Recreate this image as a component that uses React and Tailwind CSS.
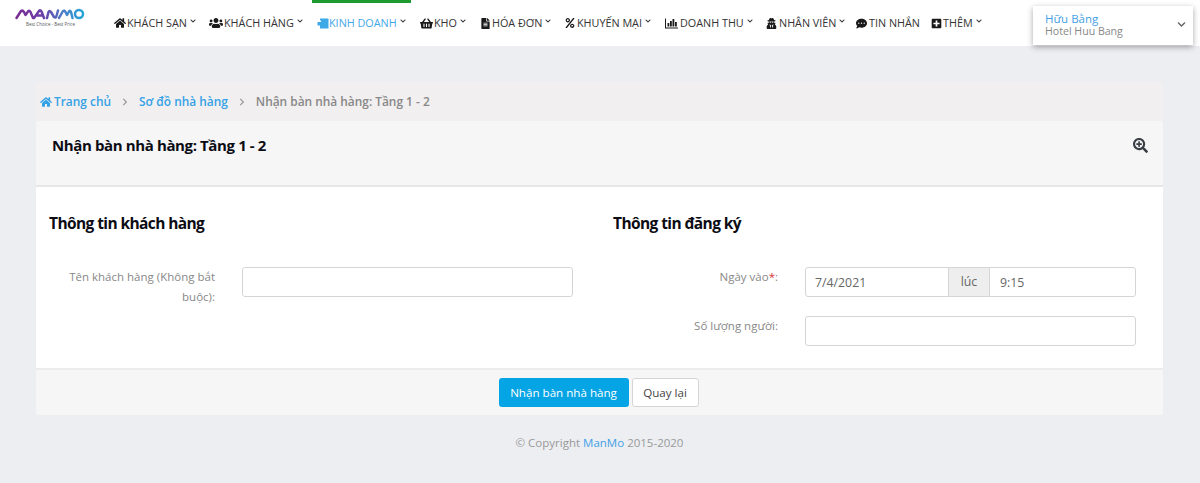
import React from "react";
import { FaHome, FaUsers, FaShoppingBasket, FaFileAlt, FaPercent, FaUserSecret, FaCommentDots, FaPlusSquare, FaSearchPlus, FaChevronDown, FaChevronRight } from "react-icons/fa";

function TagIcon({ className }) {
  return (
    <svg className={className} width="12" height="11" viewBox="0 0 12 11" fill="currentColor">
      <path d="M3 0.5 H11.5 V10.5 H3 V7.5 H0.5 V4 H4 V2.5 H3 Z" />
    </svg>
  );
}

function ChartIcon({ className }) {
  return (
    <svg className={className} width="13" height="11" viewBox="0 0 13 11" fill="currentColor">
      <path d="M0 0.5 H1 V9.5 H13 V10.5 H0 Z" />
      <rect x="2.5" y="5" width="1.8" height="3.5" />
      <rect x="5" y="3" width="1.8" height="5.5" />
      <rect x="7.5" y="1" width="1.8" height="7.5" />
      <rect x="10" y="4" width="1.8" height="4.5" />
    </svg>
  );
}

const items = [
  { label: "KHÁCH SẠN", Icon: FaHome, w: "w-[95px]", iw: "w-[13px]", is: "text-[12px]", caret: true },
  { label: "KHÁCH HÀNG", Icon: FaUsers, w: "w-[103px]", iw: "w-[15px]", is: "text-[14px]", caret: true },
  { label: "KINH DOANH", Icon: TagIcon, w: "w-[108px]", iw: "w-[12px]", caret: true, active: true },
  { label: "KHO", Icon: FaShoppingBasket, w: "w-[60px]", iw: "w-[14px]", is: "text-[13px]", caret: true },
  { label: "HÓA ĐƠN", Icon: FaFileAlt, w: "w-[85px]", iw: "w-[12px]", is: "text-[11px]", caret: true },
  { label: "KHUYẾN MẠI", Icon: FaPercent, w: "w-[100px]", iw: "w-[12px]", is: "text-[10px]", caret: true },
  { label: "DOANH THU", Icon: ChartIcon, w: "w-[101px]", iw: "w-[15px]", caret: true },
  { label: "NHÂN VIÊN", Icon: FaUserSecret, w: "w-[90px]", iw: "w-[13px]", is: "text-[11px]", caret: true },
  { label: "TIN NHẮN", Icon: FaCommentDots, w: "w-[75px]", iw: "w-[13px]", is: "text-[11px]" },
  { label: "THÊM", Icon: FaPlusSquare, w: "w-[60px]", iw: "w-[12px]", is: "text-[11px]", caret: true },
];

function Logo() {
  return (
    <div className="w-[114px] h-full pl-[15px] pt-[8px] flex flex-col">
      <svg width="70" height="12" viewBox="0 0 70 12" fill="none" strokeWidth="2.5" strokeLinejoin="round" strokeLinecap="round">
        <defs>
          <linearGradient id="lg" x1="0" x2="70" y1="0" y2="0" gradientUnits="userSpaceOnUse">
            <stop offset="0" stopColor="#7b2d91" />
            <stop offset="0.4" stopColor="#6a3fa8" />
            <stop offset="0.7" stopColor="#4a80c8" />
            <stop offset="1" stopColor="#1fa8dc" />
          </linearGradient>
        </defs>
        <path stroke="url(#lg)" d="M1.5 10 L6 3 Q7.5 2 9 4 L10.5 7 L13 3.5 Q14.5 2 15.5 4 L18 10 M19 10 L24 3 Q25.5 1.5 26.5 3.5 L29 10 M22 7.5 H28 M32 10 L33.5 4 Q34.5 2 36 4 L39 9 Q41 10.5 41.5 8 L43 2.5 M44 10 L48 3 Q49.5 2 50.5 4 L52 7 L54 3.5 Q55.5 2 56 4 L57.5 10" />
        <circle cx="64" cy="6" r="4" stroke="url(#lg)" />
      </svg>
      <span className="text-[4.5px] leading-[5px] text-[#555] ml-[11px] mt-[2px] whitespace-nowrap">Best Choice - Best Price</span>
    </div>
  );
}

function NavItem({ label, Icon, w, iw, is = "", caret, active }) {
  return (
    <div className={`${w} shrink-0 h-full relative flex items-center text-[10.8px] whitespace-nowrap ${active ? "text-[#3fa9e8]" : "text-[#333]"}`}>
      {active && <div className="absolute top-0 left-0 w-[99px] h-[3px] bg-[#1e9a2f]" />}
      <span className={`flex items-center ${active ? "pl-[5px]" : ""}`}>
        <span className={`${iw} flex items-center`}>
          <Icon className={`${is} ${active ? "text-[#3fa9e8]" : "text-[#1a1a1a]"}`} />
        </span>
        <span>{label}</span>
        {caret && <FaChevronDown className="text-[6px] ml-[3px] -mt-[4px] text-[#333]" />}
      </span>
    </div>
  );
}

function Header() {
  return (
    <header className="h-[46px] bg-white flex relative">
      <Logo />
      <nav className="flex h-full">
        {items.map((it) => <NavItem key={it.label} {...it} />)}
      </nav>
      <div className="absolute left-[1033px] top-[6px] w-[160px] h-[39px] bg-white shadow-[0_2px_6px_rgba(0,0,0,0.35)] pl-[12px] pt-[6px] leading-[13px]">
        <div className="text-[11.5px] text-[#3fa0e6]">Hữu Bằng</div>
        <div className="text-[10.6px] text-[#888]">Hotel Huu Bang</div>
        <FaChevronDown className="absolute right-[7px] top-[14px] text-[9px] text-[#666]" />
      </div>
    </header>
  );
}

function Breadcrumb() {
  return (
    <div className="h-[39px] bg-[#f1eff0] flex items-center pl-[4px] pt-[1px] text-[11.9px] font-semibold rounded-t-[4px]">
      <FaHome className="text-[#35a2e6] text-[12px] mr-[2px]" />
      <span className="text-[#35a2e6]">Trang chủ</span>
      <FaChevronRight className="text-[#999] text-[8px] mx-[10px]" />
      <span className="text-[#35a2e6]">Sơ đồ nhà hàng</span>
      <FaChevronRight className="text-[#999] text-[8px] mx-[10px]" />
      <span className="text-[#888]">Nhận bàn nhà hàng: Tầng 1 - 2</span>
    </div>
  );
}

function Field({ label, star, children, labelClass = "" }) {
  return (
    <div className="flex items-start">
      <label className={`text-[11.5px] leading-[20px] text-[#888] text-right ${labelClass}`}>
        {label}{star && <span className="text-[#d9343a]">*</span>}{star && ":"}
      </label>
      {children}
    </div>
  );
}

const boxClass = "h-[30px] bg-white border border-[#d5d5d5] rounded-[3px]";

export default function App() {
  return (
    <div className="min-h-[483px] bg-[#eceef2] text-[#333]" style={{ fontFamily: '"Open Sans", sans-serif' }}>
      <Header />
      <main className="pt-[36px] pl-[36px] w-[1163px]">
        <Breadcrumb />
        <section className="bg-white rounded-[4px] overflow-hidden">
          <div className="h-[66px] bg-[#f6f6f6] border-b-[2px] border-[#e6e6e6] flex justify-between pl-[16px] pr-[15px] pt-[14px]">
            <h1 className="text-[15px] leading-[20px] font-bold text-[#0c0c14] tracking-[-0.38px]">Nhận bàn nhà hàng: Tầng 1 - 2</h1>
            <FaSearchPlus className="text-[#3a3f46] text-[15px] mt-[3px]" />
          </div>
          <div className="h-[181px] bg-white flex">
            <div className="w-[564px] pl-[13px] pt-[26px]">
              <h2 className="text-[15.5px] leading-[20px] font-bold text-[#0c0c14] tracking-[-0.6px]">Thông tin khách hàng</h2>
              <div className="mt-[34px]">
                <Field label="Tên khách hàng (Không bắt buộc):" labelClass="w-[167px] ml-[-1px]">
                  <div className={`${boxClass} w-[331px] ml-[27px]`} />
                </Field>
              </div>
            </div>
            <div className="flex-1 pl-[13px] pt-[26px]">
              <h2 className="text-[15.5px] leading-[20px] font-bold text-[#0c0c14] tracking-[-0.6px]">Thông tin đăng ký</h2>
              <div className="mt-[34px] flex flex-col gap-[19px]">
                <Field label="Ngày vào" star labelClass="w-[165px] ml-[0px]">
                  <div className="ml-[27px] w-[331px] h-[30px] flex text-[12.3px] text-[#666]">
                    <div className="w-[144px] bg-white border border-[#d5d5d5] rounded-l-[3px] pl-[9px] leading-[29px]">7/4/2021</div>
                    <div className="w-[40px] bg-[#eeeeee] border-y border-[#d5d5d5] text-center leading-[27px]">lúc</div>
                    <div className="flex-1 bg-white border border-[#d5d5d5] rounded-r-[3px] pl-[10px] leading-[29px]">9:15</div>
                  </div>
                </Field>
                <Field label="Số lượng người:" labelClass="w-[165px] ml-[0px]">
                  <div className={`${boxClass} w-[331px] ml-[27px]`} />
                </Field>
              </div>
            </div>
          </div>
          <div className="h-[47px] bg-[#f6f6f6] border-t-[2px] border-[#ececec] flex justify-center gap-[3px] pt-[8px] pr-[2px]">
            <button className="w-[130px] h-[29px] rounded-[3px] bg-[#05a4e4] text-white text-[11.6px]">Nhận bàn nhà hàng</button>
            <button className="w-[67px] h-[29px] rounded-[3px] bg-white border border-[#d5d5d5] text-[#444] text-[11.6px]">Quay lại</button>
          </div>
        </section>
        <footer className="text-center text-[11.5px] text-[#999] pt-[19px]">
          © Copyright <span className="text-[#3fa0e6]">ManMo</span> 2015-2020
        </footer>
      </main>
    </div>
  );
}
